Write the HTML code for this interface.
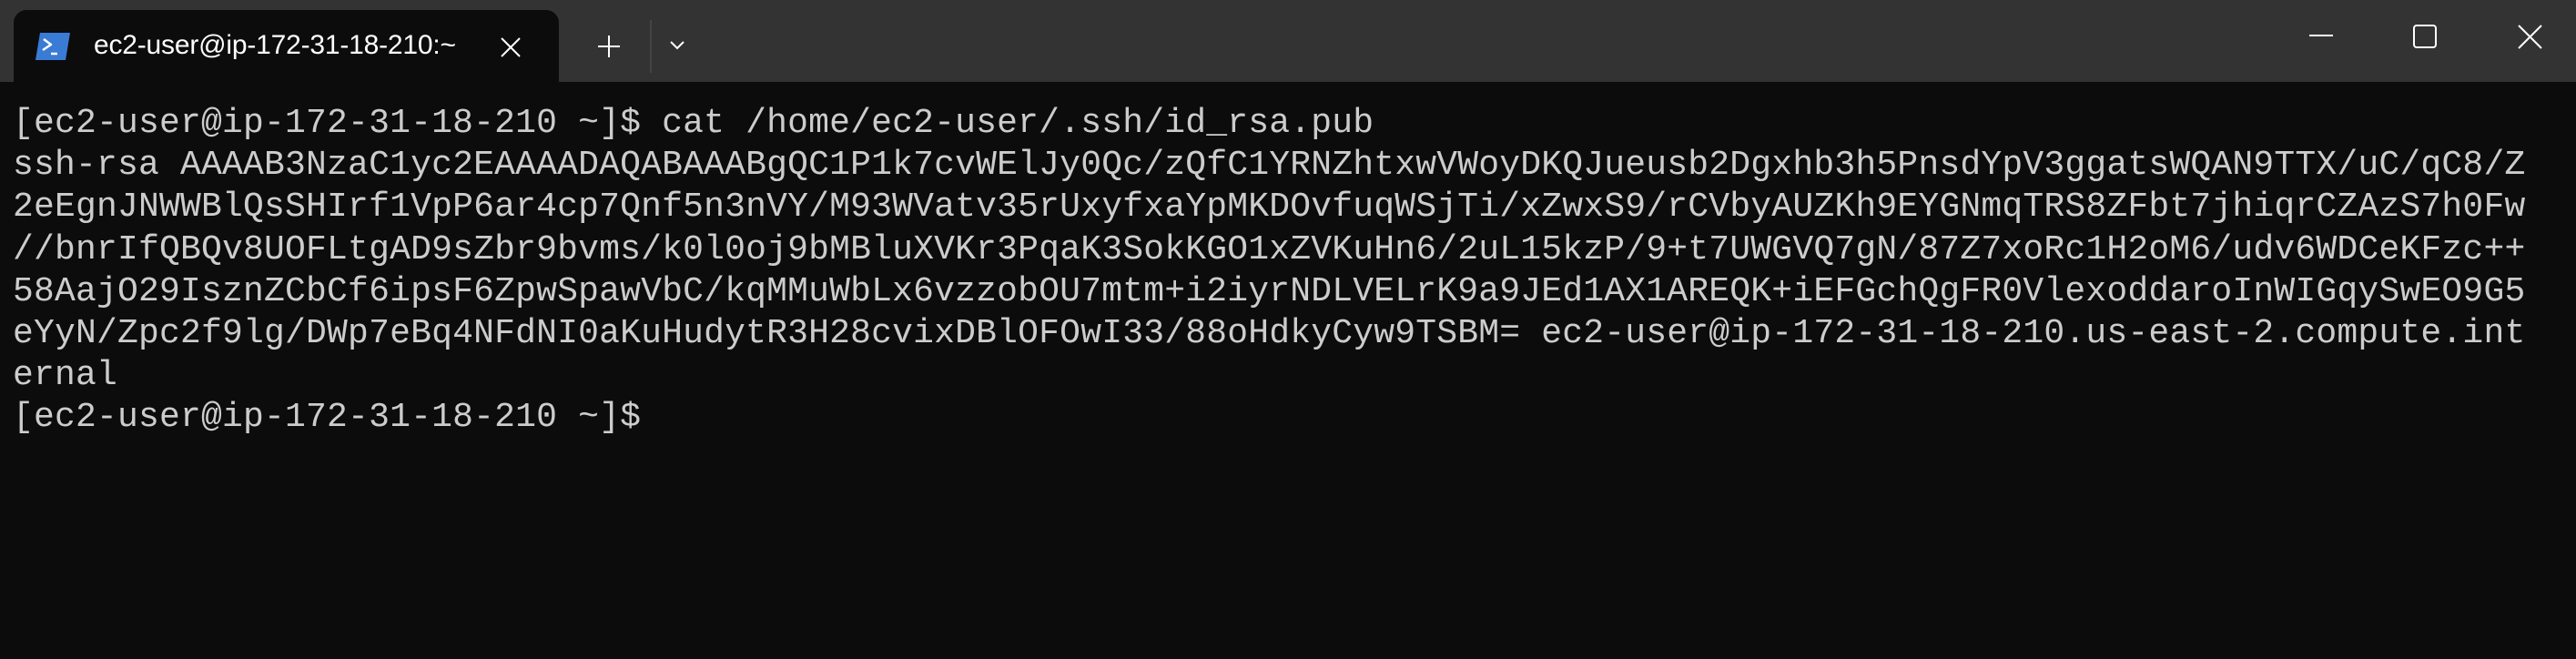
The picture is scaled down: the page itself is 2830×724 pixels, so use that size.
<!DOCTYPE html>
<html><head><meta charset="utf-8"><style>
html,body{margin:0;padding:0;width:2830px;height:724px;background:#0c0c0c;overflow:hidden}
.bar{position:absolute;left:0;top:0;width:2830px;height:90px;background:#333333}
.tab{position:absolute;left:15px;top:11px;width:599px;height:79px;background:#0c0c0c;border-radius:14px 14px 0 0}
.title{position:absolute;left:103px;top:33px;font:30px "Liberation Sans",sans-serif;color:#fff;white-space:nowrap;letter-spacing:-0.2px}
.term{position:absolute;left:14px;top:113px;font-family:"Liberation Mono",monospace;font-size:38px;letter-spacing:0.2px;line-height:46.2px;color:#cccccc;white-space:pre}
svg{position:absolute}
</style></head><body>
<div class="bar"></div>
<div class="tab"></div>
<svg style="left:36px;top:34px" width="44" height="34" viewBox="0 0 44 34">
<path d="M8 2 H41 L36 32 H3 Z" fill="#3a7bd5"/>
<path d="M12 9 L20 15 L11 21" stroke="#fff" stroke-width="2.5" fill="none" stroke-linejoin="round"/>
<path d="M20 25 H27" stroke="#fff" stroke-width="2.5"/>
</svg>
<div class="title">ec2-user@ip-172-31-18-210:~</div>
<svg style="left:549px;top:40px" width="24" height="24" viewBox="0 0 24 24"><path d="M2 2 L22 22 M22 2 L2 22" stroke="#fff" stroke-width="2"/></svg>
<svg style="left:656px;top:38px" width="26" height="26" viewBox="0 0 26 26"><path d="M13 1 V25 M1 13 H25" stroke="#fff" stroke-width="2"/></svg>
<div style="position:absolute;left:714px;top:22px;width:2px;height:58px;background:#444"></div>
<svg style="left:735px;top:44px" width="18" height="12" viewBox="0 0 18 12"><path d="M2 2 L9 9 L16 2" stroke="#fff" stroke-width="2" fill="none"/></svg>
<svg style="left:2537px;top:37px" width="26" height="4"><path d="M0 2 H26" stroke="#fff" stroke-width="2"/></svg>
<svg style="left:2651px;top:27px" width="26" height="26" viewBox="0 0 26 26"><rect x="1" y="1" width="24" height="24" rx="3" stroke="#fff" stroke-width="2" fill="none"/></svg>
<svg style="left:2766px;top:27px" width="27" height="27" viewBox="0 0 27 27"><path d="M1 1 L26 26 M26 1 L1 26" stroke="#fff" stroke-width="2"/></svg>
<div class="term">[ec2-user@ip-172-31-18-210 ~]$ cat /home/ec2-user/.ssh/id_rsa.pub
ssh-rsa AAAAB3NzaC1yc2EAAAADAQABAAABgQC1P1k7cvWElJy0Qc/zQfC1YRNZhtxwVWoyDKQJueusb2Dgxhb3h5PnsdYpV3ggatsWQAN9TTX/uC/qC8/Z
2eEgnJNWWBlQsSHIrf1VpP6ar4cp7Qnf5n3nVY/M93WVatv35rUxyfxaYpMKDOvfuqWSjTi/xZwxS9/rCVbyAUZKh9EYGNmqTRS8ZFbt7jhiqrCZAzS7h0Fw
//bnrIfQBQv8UOFLtgAD9sZbr9bvms/k0l0oj9bMBluXVKr3PqaK3SokKGO1xZVKuHn6/2uL15kzP/9+t7UWGVQ7gN/87Z7xoRc1H2oM6/udv6WDCeKFzc++
58AajO29IsznZCbCf6ipsF6ZpwSpawVbC/kqMMuWbLx6vzzobOU7mtm+i2iyrNDLVELrK9a9JEd1AX1AREQK+iEFGchQgFR0VlexoddaroInWIGqySwEO9G5
eYyN/Zpc2f9lg/DWp7eBq4NFdNI0aKuHudytR3H28cvixDBlOFOwI33/88oHdkyCyw9TSBM= ec2-user@ip-172-31-18-210.us-east-2.compute.int
ernal
[ec2-user@ip-172-31-18-210 ~]$</div>
</body></html>
